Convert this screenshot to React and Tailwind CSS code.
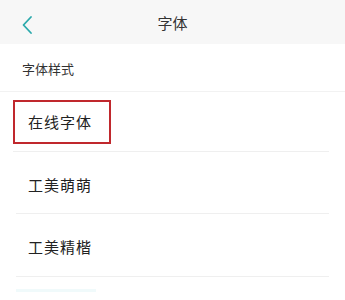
import React from 'react';

const fonts = ['工美萌萌', '工美精楷'];

const App = () => {
  return (
    <div
      className="w-[345px] h-[300px] overflow-hidden bg-white text-[#222]"
      style={{ fontFamily: '"Noto Sans CJK SC", "Noto Sans", sans-serif' }}
    >
      <div className="relative h-[44px] bg-[#f7f7f7] flex items-center justify-center">
        <svg className="absolute left-[20px] top-[15px]" width="14" height="20" viewBox="0 0 14 20" fill="none">
          <path d="M11 2 L3.5 10 L11 18" stroke="#2aa9ab" strokeWidth="1.8" strokeLinecap="round" strokeLinejoin="round" />
        </svg>
        <span className="text-[15px] text-[#333] leading-none mt-[1px]">字体</span>
      </div>

      <div className="h-[48px] flex items-center pl-[22px] border-b border-[#f2f2f2]">
        <span className="text-[13px] text-[#333] leading-none mt-[2px]">字体样式</span>
      </div>

      <div className="px-[16px]">
        <div className="h-[60px] border-b border-[#efefef] flex items-center -ml-[3px]">
          <div className="w-[98px] h-[44px] border-2 border-[#c0282d] flex items-center pl-[13px]">
            <span className="text-[15px] leading-none tracking-[1px]">在线字体</span>
          </div>
        </div>
        <div className="h-[62px] border-b border-[#efefef] flex items-center pl-[12px]">
          <span className="text-[15px] leading-none tracking-[1px] mt-[3px]">{fonts[0]}</span>
        </div>
        <div className="h-[63px] border-b border-[#efefef] flex items-center pl-[12px]">
          <span className="text-[15px] leading-none tracking-[1px] mt-[3px]">{fonts[1]}</span>
        </div>
      </div>

      <div className="h-[19px] flex items-end pl-[16px] pb-[4px]">
        <div className="w-[80px] h-[3px] bg-[#f0fafb]" />
      </div>
    </div>
  );
};

export default App;
